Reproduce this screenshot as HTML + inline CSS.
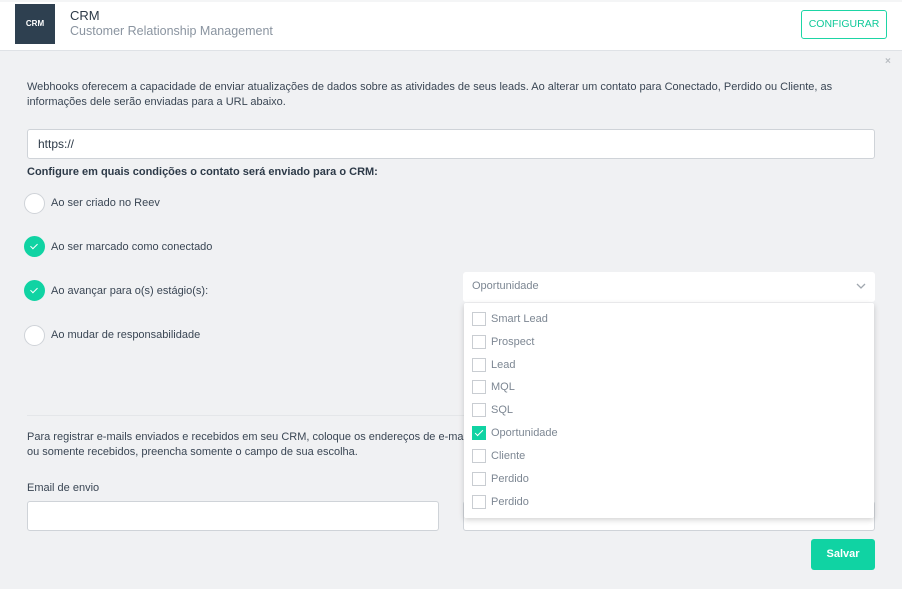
<!DOCTYPE html>
<html><head><meta charset="utf-8"><style>
*{margin:0;padding:0;box-sizing:border-box}
body{width:902px;height:589px;background:#f0f1f3;font-family:"Liberation Sans",sans-serif;position:relative;overflow:hidden;color:#2d3a48}
.a{position:absolute;white-space:nowrap}
.hdr{position:absolute;left:0;top:0;width:902px;height:51px;background:#fff;border-bottom:1px solid #dfe2e6;border-top:2px solid #f4f5f6}
.t{font-size:11px;color:#3a4654}
.inp{position:absolute;background:#fff;border:1px solid #cfd3d8;border-radius:3px}
.rad{position:absolute;left:24px;width:21px;height:21px;border-radius:50%;background:#fff;border:1px solid #cfd3d8}
.rad.on{background:#10d3a3;border-color:#10d3a3}
.rad.on:after{content:"";position:absolute;left:7px;top:5px;width:3px;height:6px;border:solid #fff;border-width:0 1.5px 1.5px 0;transform:rotate(45deg)}
.cb{position:absolute;left:472px;width:14px;height:14px;border:1px solid #c9cdd2;background:#fff}
.cb.on{background:#10d3a3;border-color:#10d3a3}
.cb.on:after{content:"";position:absolute;left:4px;top:1px;width:3px;height:7px;border:solid #fff;border-width:0 1.5px 1.5px 0;transform:rotate(45deg)}
.li{position:absolute;left:491px;font-size:11px;color:#7d8793}
</style></head><body>
<div class="hdr"></div>
<div class="a" style="left:15px;top:4px;width:40px;height:40px;background:#2e4050;color:#fff;font-size:8px;font-weight:bold;line-height:40px;text-align:center">CRM</div>
<div class="a" style="left:70px;top:8px;font-size:13px;color:#2d3a48">CRM</div>
<div class="a" style="left:70px;top:24px;font-size:12.5px;color:#8a94a0">Customer Relationship Management</div>
<div class="a" style="left:801px;top:10px;width:86px;height:29px;border:1px solid #1dd5a5;border-radius:3px;color:#10c999;font-size:10.5px;line-height:27px;text-align:center">CONFIGURAR</div>
<div class="a" style="left:885px;top:56px;font-size:10px;color:#b8bcc1;font-weight:bold">×</div>
<div class="a t" style="left:27px;top:81px">Webhooks oferecem a capacidade de enviar atualizações de dados sobre as atividades de seus leads. Ao alterar um contato para Conectado, Perdido ou Cliente, as</div>
<div class="a t" style="left:27px;top:96px">informações dele serão enviadas para a URL abaixo.</div>
<div class="inp" style="left:27px;top:129px;width:848px;height:30px"></div>
<div class="a" style="left:38px;top:137px;font-size:12px;color:#2d3a48">https://</div>
<div class="a" style="left:27px;top:166px;font-size:11px;font-weight:bold;color:#2d3a48">Configure em quais condições o contato será enviado para o CRM:</div>
<div class="rad" style="top:193px"></div><div class="a t" style="left:51px;top:197px">Ao ser criado no Reev</div>
<div class="rad on" style="top:236px"></div><div class="a t" style="left:51px;top:241px">Ao ser marcado como conectado</div>
<div class="rad on" style="top:280px"></div><div class="a t" style="left:51px;top:285px">Ao avançar para o(s) estágio(s):</div>
<div class="rad" style="top:325px"></div><div class="a t" style="left:51px;top:329px">Ao mudar de responsabilidade</div>
<div class="a" style="left:27px;top:415px;width:440px;height:1px;background:#e4e6e9"></div>
<div class="a t" style="left:27px;top:431px">Para registrar e-mails enviados e recebidos em seu CRM, coloque os endereços de e-mai</div>
<div class="a t" style="left:27px;top:446px">ou somente recebidos, preencha somente o campo de sua escolha.</div>
<div class="a t" style="left:27px;top:482px">Email de envio</div>
<div class="inp" style="left:27px;top:501px;width:412px;height:30px"></div>
<div class="inp" style="left:463px;top:501px;width:412px;height:30px"></div>
<div class="a" style="left:463px;top:272px;width:412px;height:30px;background:#fff;border-radius:3px"></div>
<div class="a" style="left:472px;top:280px;font-size:11px;color:#7d8793">Oportunidade</div>
<svg class="a" style="left:856px;top:282px" width="10" height="8"><path d="M1 2l4 4 4-4" fill="none" stroke="#a0a7af" stroke-width="1.3"/></svg>
<div class="a" style="left:464px;top:303px;width:410px;height:215px;background:#fff;box-shadow:0 2px 6px rgba(0,0,0,.18);border-radius:2px"></div>
<div class="cb" style="top:312px"></div><div class="li" style="top:313px">Smart Lead</div>
<div class="cb" style="top:335px"></div><div class="li" style="top:336px">Prospect</div>
<div class="cb" style="top:358px"></div><div class="li" style="top:359px">Lead</div>
<div class="cb" style="top:380px"></div><div class="li" style="top:381px">MQL</div>
<div class="cb" style="top:403px"></div><div class="li" style="top:404px">SQL</div>
<div class="cb on" style="top:426px"></div><div class="li" style="top:427px">Oportunidade</div>
<div class="cb" style="top:449px"></div><div class="li" style="top:450px">Cliente</div>
<div class="cb" style="top:472px"></div><div class="li" style="top:473px">Perdido</div>
<div class="cb" style="top:495px"></div><div class="li" style="top:496px">Perdido</div>
<div class="a" style="left:811px;top:539px;width:64px;height:31px;background:#10d3a3;border-radius:3px;color:#fff;font-size:11px;font-weight:bold;line-height:31px;text-align:center">Salvar</div>
</body></html>
